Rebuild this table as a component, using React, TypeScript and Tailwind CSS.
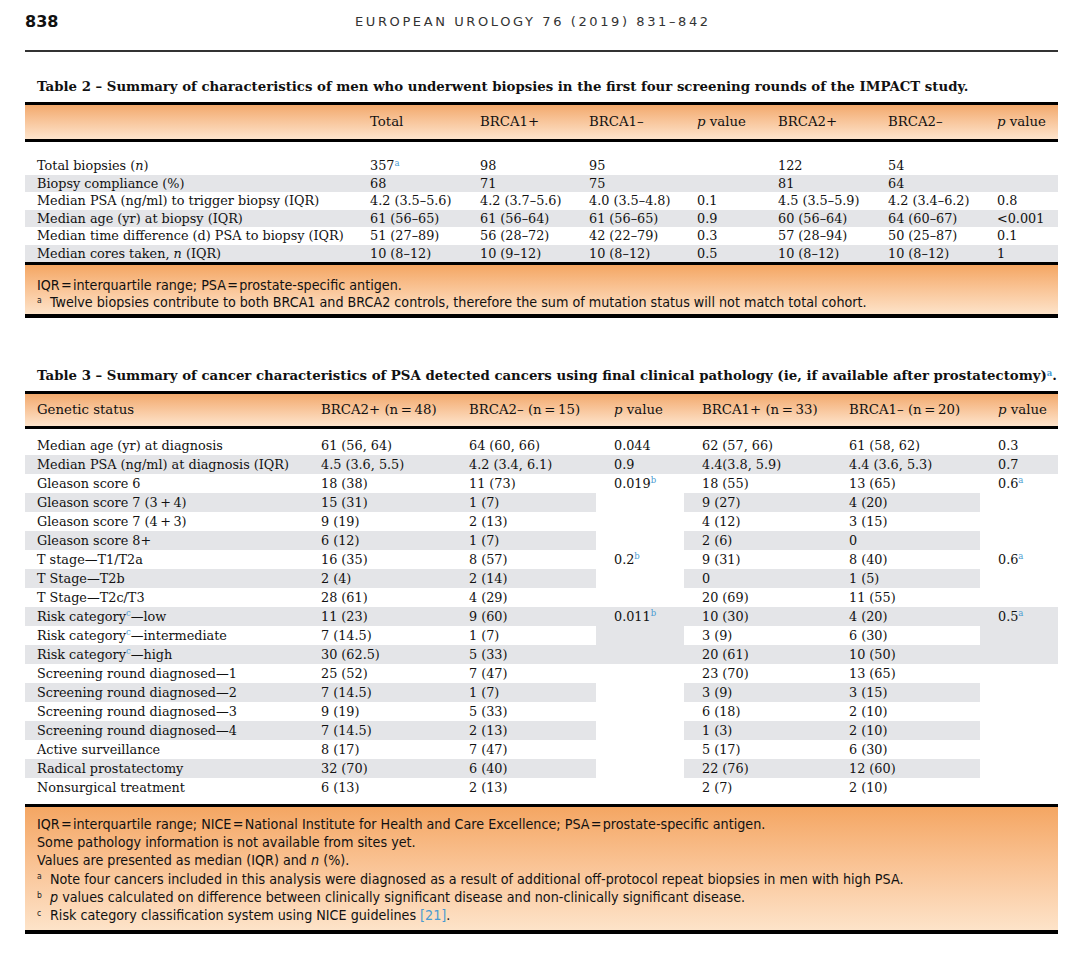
import React from "react";

// --- fonts ---
const SERIF = "font-['DejaVu_Serif',serif]";
const NARROW =
  "font-['Liberation_Sans_Narrow','DejaVu_Sans_Condensed','Roboto_Condensed','Liberation_Sans',sans-serif]";

const Sup = ({ children, blue = true }: { children: React.ReactNode; blue?: boolean }) => (
  <sup className={`text-[8.5px] ${blue ? "text-[#4a9bd1]" : "text-[#222]"}`}>{children}</sup>
);

const P = () => <i>p</i>;
const N = () => <i>n</i>;

// Table 2 data
const t2Widths = [327, 110, 109, 108, 81, 110, 109, 79];
const t2Head: React.ReactNode[] = [
  "",
  "Total",
  "BRCA1+",
  "BRCA1–",
  <>
    <P /> value
  </>,
  "BRCA2+",
  "BRCA2–",
  <>
    <P /> value
  </>,
];
const t2Rows: React.ReactNode[][] = [
  [
    <>
      Total biopsies (<N />)
    </>,
    <>
      357<Sup>a</Sup>
    </>,
    "98",
    "95",
    "",
    "122",
    "54",
    "",
  ],
  ["Biopsy compliance (%)", "68", "71", "75", "", "81", "64", ""],
  [
    "Median PSA (ng/ml) to trigger biopsy (IQR)",
    "4.2 (3.5–5.6)",
    "4.2 (3.7–5.6)",
    "4.0 (3.5–4.8)",
    "0.1",
    "4.5 (3.5–5.9)",
    "4.2 (3.4–6.2)",
    "0.8",
  ],
  ["Median age (yr) at biopsy (IQR)", "61 (56–65)", "61 (56–64)", "61 (56–65)", "0.9", "60 (56–64)", "64 (60–67)", "<0.001"],
  [
    "Median time difference (d) PSA to biopsy (IQR)",
    "51 (27–89)",
    "56 (28–72)",
    "42 (22–79)",
    "0.3",
    "57 (28–94)",
    "50 (25–87)",
    "0.1",
  ],
  [
    <>
      Median cores taken, <N /> (IQR)
    </>,
    "10 (8–12)",
    "10 (9–12)",
    "10 (8–12)",
    "0.5",
    "10 (8–12)",
    "10 (8–12)",
    "1",
  ],
];

// Table 3 data
const t3Widths = [278, 148, 145, 88, 147, 149, 78];
const t3Head: React.ReactNode[] = [
  "Genetic status",
  "BRCA2+ (n\u2009=\u200948)",
  "BRCA2– (n\u2009=\u200915)",
  <>
    <P /> value
  </>,
  "BRCA1+ (n\u2009=\u200933)",
  "BRCA1– (n\u2009=\u200920)",
  <>
    <P /> value
  </>,
];

const risk = (s: string) => (
  <>
    Risk category<Sup>c</Sup>—{s}
  </>
);

// label, BRCA2+, BRCA2-, BRCA1+, BRCA1-
const t3Rows: React.ReactNode[][] = [
  ["Median age (yr) at diagnosis", "61 (56, 64)", "64 (60, 66)", "62 (57, 66)", "61 (58, 62)"],
  ["Median PSA (ng/ml) at diagnosis (IQR)", "4.5 (3.6, 5.5)", "4.2 (3.4, 6.1)", "4.4(3.8, 5.9)", "4.4 (3.6, 5.3)"],
  ["Gleason score 6", "18 (38)", "11 (73)", "18 (55)", "13 (65)"],
  ["Gleason score 7 (3\u2009+\u20094)", "15 (31)", "1 (7)", "9 (27)", "4 (20)"],
  ["Gleason score 7 (4\u2009+\u20093)", "9 (19)", "2 (13)", "4 (12)", "3 (15)"],
  ["Gleason score 8+", "6 (12)", "1 (7)", "2 (6)", "0"],
  ["T stage—T1/T2a", "16 (35)", "8 (57)", "9 (31)", "8 (40)"],
  ["T Stage—T2b", "2 (4)", "2 (14)", "0", "1 (5)"],
  ["T Stage—T2c/T3", "28 (61)", "4 (29)", "20 (69)", "11 (55)"],
  [risk("low"), "11 (23)", "9 (60)", "10 (30)", "4 (20)"],
  [risk("intermediate"), "7 (14.5)", "1 (7)", "3 (9)", "6 (30)"],
  [risk("high"), "30 (62.5)", "5 (33)", "20 (61)", "10 (50)"],
  ["Screening round diagnosed—1", "25 (52)", "7 (47)", "23 (70)", "13 (65)"],
  ["Screening round diagnosed—2", "7 (14.5)", "1 (7)", "3 (9)", "3 (15)"],
  ["Screening round diagnosed—3", "9 (19)", "5 (33)", "6 (18)", "2 (10)"],
  ["Screening round diagnosed—4", "7 (14.5)", "2 (13)", "1 (3)", "2 (10)"],
  ["Active surveillance", "8 (17)", "7 (47)", "5 (17)", "6 (30)"],
  ["Radical prostatectomy", "32 (70)", "6 (40)", "22 (76)", "12 (60)"],
  ["Nonsurgical treatment", "6 (13)", "2 (13)", "2 (7)", "2 (10)"],
];

// p value cells spanning several rows
const pGroups: { start: number; span: number; p1: React.ReactNode; p2: React.ReactNode }[] = [
  { start: 0, span: 1, p1: "0.044", p2: "0.3" },
  { start: 1, span: 1, p1: "0.9", p2: "0.7" },
  { start: 2, span: 4, p1: <>0.019<Sup>b</Sup></>, p2: <>0.6<Sup>a</Sup></> },
  { start: 6, span: 3, p1: <>0.2<Sup>b</Sup></>, p2: <>0.6<Sup>a</Sup></> },
  { start: 9, span: 3, p1: <>0.011<Sup>b</Sup></>, p2: <>0.5<Sup>a</Sup></> },
  { start: 12, span: 7, p1: "", p2: "" },
];

const GRAY = "bg-[#e4e5e8]";
const HEAD_BG = "bg-gradient-to-b from-[#f2a96c] to-[#fde4cc]";
const FOOT_BG = "bg-gradient-to-b from-[#f4a662] to-[#fde3c9]";

const Cols = ({ widths }: { widths: number[] }) => (
  <colgroup>
    {widths.map((w, i) => (
      <col key={i} style={{ width: w }} />
    ))}
  </colgroup>
);

const Rule = ({ h = "h-[3px]" }: { h?: string }) => <div className={`${h} bg-black`} />;

const Table2 = () => (
  <div className="mt-[6px] w-[1033px]">
    <Rule />
    <table className="w-full table-fixed">
      <Cols widths={t2Widths} />
      <thead>
        <tr>
          {t2Head.map((h, i) => (
            <th
              key={i}
              className={`${HEAD_BG} h-[34px] text-left font-normal text-[13.3px] ${i === 0 ? "pl-[12px]" : "pl-[18px]"}`}
            >
              {h}
            </th>
          ))}
        </tr>
      </thead>
    </table>
    <Rule />
    <table className="mt-[15px] w-full table-fixed">
      <Cols widths={t2Widths} />
      <tbody>
        {t2Rows.map((row, r) => (
          <tr key={r}>
            {row.map((c, i) => (
              <td
                key={i}
                className={`h-[17.5px] leading-[17.5px] whitespace-nowrap ${r % 2 ? GRAY : ""} ${
                  i === 0 ? "pl-[12px]" : "pl-[18px]"
                }`}
              >
                {c}
              </td>
            ))}
          </tr>
        ))}
      </tbody>
    </table>
    <Rule />
    <div className={`${FOOT_BG} ${NARROW} pt-[12px] pb-[3px] pl-[12px] text-[14.2px] leading-[17px]`}>
      <div>IQR{"\u200a=\u200a"}interquartile range; PSA{"\u200a=\u200a"}prostate-specific antigen.</div>
      <div>
        <span className="inline-block w-[13px]">
          <Sup blue={false}>a</Sup>
        </span>
        Twelve biopsies contribute to both BRCA1 and BRCA2 controls, therefore the sum of mutation status will not
        match total cohort.
      </div>
    </div>
    <Rule h="h-[4px]" />
  </div>
);

const Table3 = () => (
  <div className="mt-[6px] w-[1033px]">
    <Rule />
    <table className="w-full table-fixed">
      <Cols widths={t3Widths} />
      <thead>
        <tr>
          {t3Head.map((h, i) => (
            <th
              key={i}
              className={`${HEAD_BG} h-[32px] text-left font-normal text-[13.3px] whitespace-nowrap ${
                i === 0 ? "pl-[12px]" : "pl-[18px]"
              }`}
            >
              {h}
            </th>
          ))}
        </tr>
      </thead>
    </table>
    <Rule />
    <table className="mt-[6.5px] w-full table-fixed">
      <Cols widths={t3Widths} />
      <tbody>
        {t3Rows.map((row, r) => {
          const bg = r % 2 ? GRAY : "";
          const g = pGroups.find((p) => p.start === r);
          const cell = (c: React.ReactNode, key: string, first = false) => (
            <td
              key={key}
              className={`h-[19px] leading-[19px] whitespace-nowrap align-top ${bg} ${first ? "pl-[12px]" : "pl-[18px]"}`}
            >
              {c}
            </td>
          );
          return (
            <tr key={r}>
              {cell(row[0], "l", true)}
              {cell(row[1], "a")}
              {cell(row[2], "b")}
              {g && (
                <td rowSpan={g.span} className={`pl-[18px] leading-[19px] align-top whitespace-nowrap ${bg}`}>
                  {g.p1}
                </td>
              )}
              {cell(row[3], "c")}
              {cell(row[4], "d")}
              {g && (
                <td rowSpan={g.span} className={`pl-[18px] leading-[19px] align-top whitespace-nowrap ${bg}`}>
                  {g.p2}
                </td>
              )}
            </tr>
          );
        })}
      </tbody>
    </table>
    <div className="h-[7.5px]" />
    <Rule />
    <div className={`${FOOT_BG} ${NARROW} pt-[8px] pb-[6px] pl-[12px] text-[14.2px] leading-[18.2px]`}>
      <div>
        IQR{"\u200a=\u200a"}interquartile range; NICE{"\u200a=\u200a"}National Institute for Health and Care Excellence;
        PSA{"\u200a=\u200a"}prostate-specific antigen.
      </div>
      <div>Some pathology information is not available from sites yet.</div>
      <div>
        Values are presented as median (IQR) and <N /> (%).
      </div>
      <div>
        <span className="inline-block w-[13px]">
          <Sup blue={false}>a</Sup>
        </span>
        Note four cancers included in this analysis were diagnosed as a result of additional off-protocol repeat biopsies
        in men with high PSA.
      </div>
      <div>
        <span className="inline-block w-[13px]">
          <Sup blue={false}>b</Sup>
        </span>
        <P /> values calculated on difference between clinically significant disease and non-clinically significant
        disease.
      </div>
      <div>
        <span className="inline-block w-[13px]">
          <Sup blue={false}>c</Sup>
        </span>
        Risk category classification system using NICE guidelines <span className="text-[#4a9bd1]">[21]</span>.
      </div>
    </div>
    <Rule h="h-[4px]" />
  </div>
);

export default function App() {
  return (
    <div className={`min-h-[954px] w-[1074px] bg-white pl-[25px] pt-[12px] text-[12.8px] text-[#111] ${SERIF}`}>
      {/* running head */}
      <div className="flex h-[20px] w-[1033px] items-center">
        <div className="w-[330px] font-['DejaVu_Sans',sans-serif] text-[16px] font-bold">838</div>
        <div className="font-['DejaVu_Sans',sans-serif] text-[13px] tracking-[2.6px] text-[#333]">
          EUROPEAN UROLOGY 76 (2019) 831–842
        </div>
      </div>
      <div className="mt-[18px] h-[1.5px] w-[1033px] bg-[#333]" />

      <div className="mt-[26.5px] pl-[12px] text-[13.3px] font-bold leading-[18px] whitespace-nowrap">
        Table 2 – Summary of characteristics of men who underwent biopsies in the first four screening rounds of the
        IMPACT study.
      </div>
      <Table2 />

      <div className="mt-[49px] pl-[12px] text-[13.3px] font-bold leading-[18px] whitespace-nowrap">
        Table 3 – Summary of cancer characteristics of PSA detected cancers using final clinical pathology (ie, if
        available after prostatectomy)<Sup>a</Sup>.
      </div>
      <Table3 />
    </div>
  );
}
